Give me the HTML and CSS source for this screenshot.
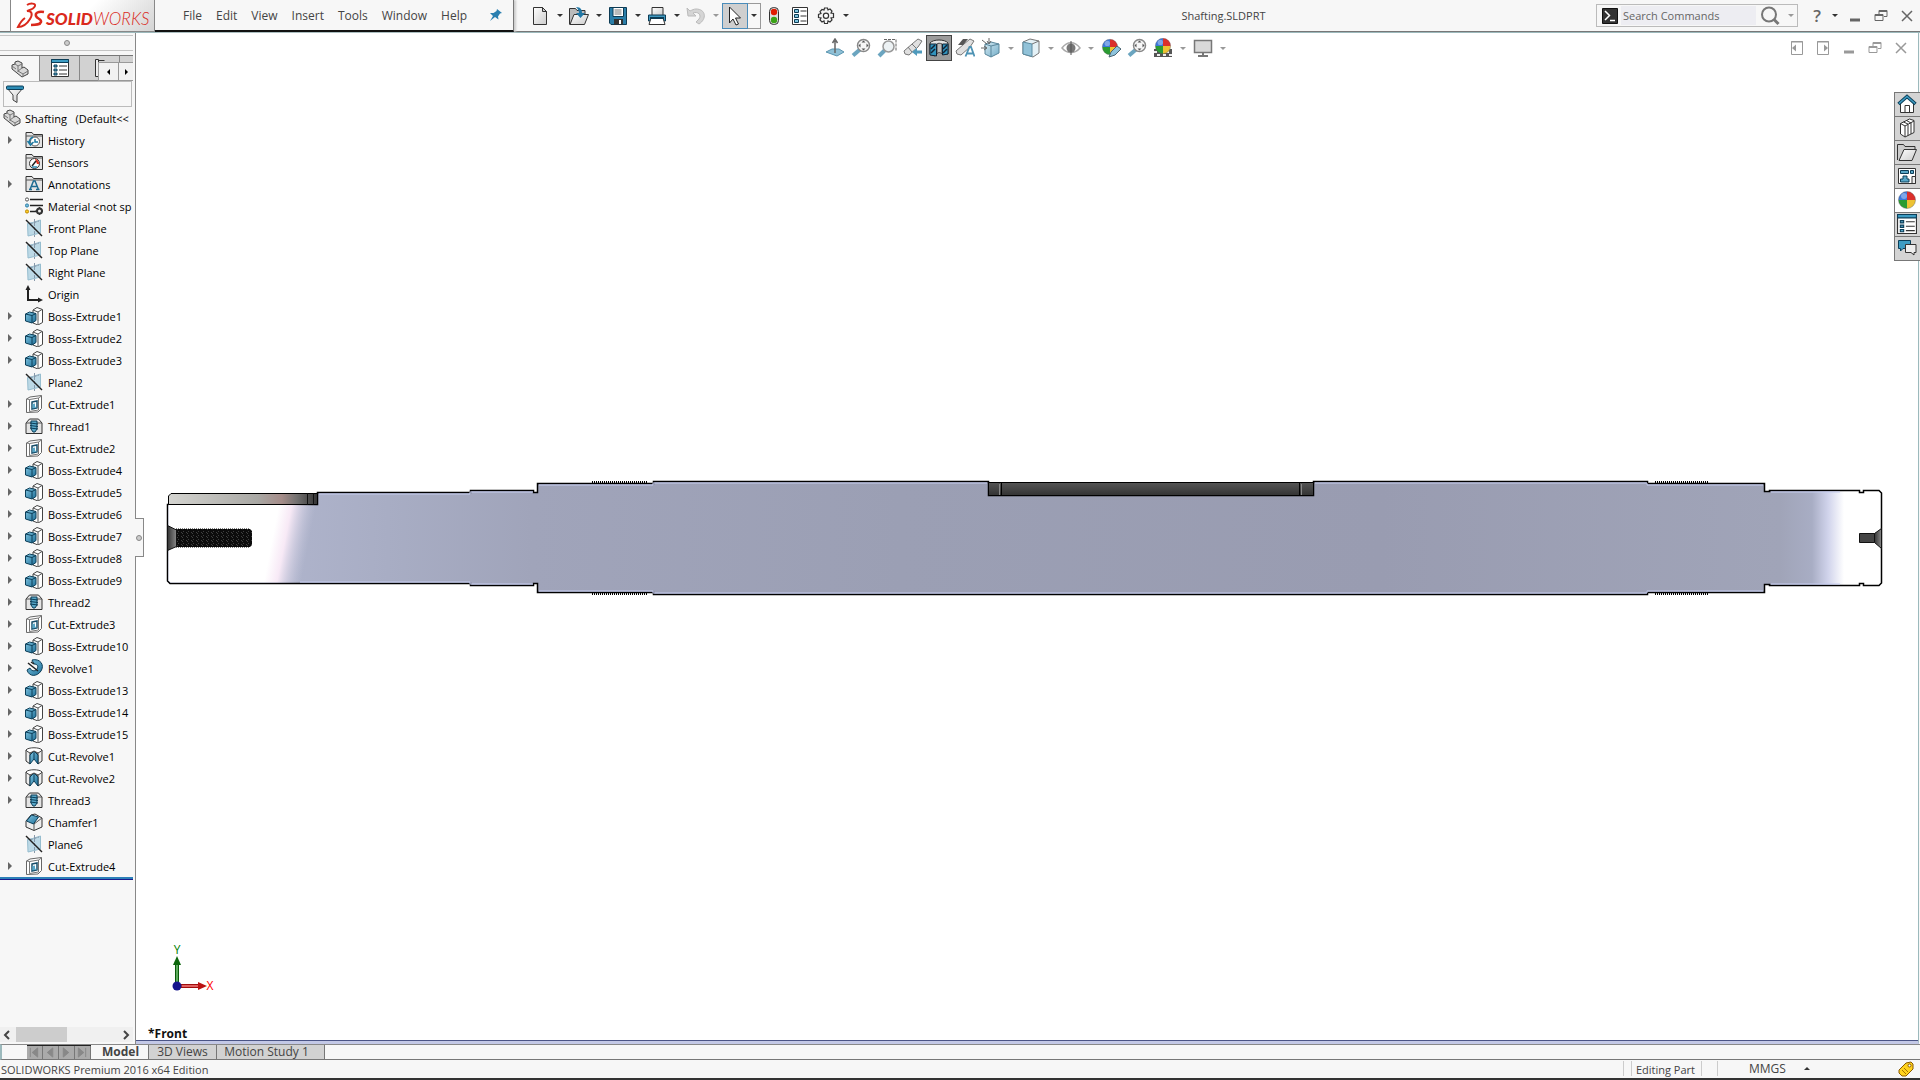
FILE: index.html
```html
<!DOCTYPE html>
<html lang="en">
<head>
<meta charset="UTF-8">
<meta name="viewport" content="width=device-width, initial-scale=1.0">
<title>Shafting.SLDPRT</title>
<link rel="stylesheet" href="styles.css">
</head>
<body>

<!-- Icon definitions -->
<svg class="defs" aria-hidden="true">
    <defs>
        <linearGradient id="paper" x1="0" y1="0" x2="1" y2="1"><stop offset="0" stop-color="#fff"/><stop offset="1" stop-color="#ccc"/></linearGradient>
        <linearGradient id="blue" x1="0" y1="0" x2="1" y2="1"><stop offset="0" stop-color="#7fc4e0"/><stop offset="1" stop-color="#1f7099"/></linearGradient>
        <linearGradient id="paleBlue" x1="0" y1="0" x2="1" y2="1"><stop offset="0" stop-color="#d3e8f1"/><stop offset="1" stop-color="#74aec9"/></linearGradient>
    </defs>

    <!-- Feature tree -->
    <symbol id="part" viewBox="0 0 18 18"><path d="M1 9V5l3-1 0-2 3-1 4 2v5l2-1 4 3v4l-6 3z" fill="#d8d8d8" stroke="#444" stroke-linejoin="round"/><path d="M4 4l3 2v6M7 6l4-2M1 6l4 3M11 8l-4 3 5 3 5-3M12 14v3" fill="none" stroke="#777"/></symbol>
    <symbol id="folder" viewBox="0 0 18 18"><path d="M1 16.500V1.500h6l1.500 2H17.500v13z" fill="#e4e4e4" stroke="#333"/><path d="M1 5h16" stroke="#555"/></symbol>
    <symbol id="history" viewBox="0 0 18 18"><use href="#folder"/><circle cx="10" cy="10.500" r="4.500" fill="#fff" stroke="#555"/><path d="M5 13a5 5 0 0 1 3-7M2.500 10l3 4 3-3M10 8v3h3" fill="none" stroke="#1b7aa3" stroke-width="1.500"/></symbol>
    <symbol id="sensors" viewBox="0 0 18 18"><use href="#folder"/><circle cx="9.500" cy="10.500" r="5" fill="#fff" stroke="#333"/><path d="M10 6a4.500 4.500 0 0 1 4 5h-2z" fill="#e0301e"/><path d="M7 13l4-5" stroke="#222" stroke-width="1.500"/><path d="M7 14h5" stroke="#2b8db5" stroke-width="1.500"/></symbol>
    <symbol id="annotations" viewBox="0 0 18 18"><use href="#folder"/><path d="M5 14.500L8.500 6h1.500l3.500 8.500M6.500 11.500h5M4 14.500h3M11 14.500h3.500" fill="none" stroke="#1e6b92" stroke-width="1.500"/></symbol>
    <symbol id="material" viewBox="0 0 18 18"><path d="M5 2.500h13M5 8.500h13M5 14.500h7" stroke="#222" stroke-width="1.500"/><circle cx="2" cy="2.500" r="1.600" fill="#fff" stroke="#555"/><circle cx="2" cy="8.500" r="1.600" fill="#7bd" stroke="#2b7fa5"/><circle cx="2" cy="14.500" r="1.600" fill="#fc2" stroke="#b80"/><circle cx="14.500" cy="14" r="2.500" fill="#eee" stroke="#333" stroke-width="2"/><path d="M14.500 10v2M14.500 16v2M10.500 14h2M16.500 14h2" stroke="#333" stroke-width="1.500"/></symbol>
    <symbol id="plane" viewBox="0 0 18 18"><path d="M2.500 4.500l5-1 8-2.500v13l-12.500 3z" fill="#bcd9e6" stroke="#96bdcf"/><path d="M9.500 0v18M5 5l9-3" stroke="#89a" stroke-dasharray="3 1" fill="none"/><path d="M1 1l16 16" stroke="#222" stroke-width="1.500"/></symbol>
    <symbol id="origin" viewBox="0 0 18 18"><path d="M3 2v13h13" fill="none" stroke="#222" stroke-width="2"/><path d="M0.500 5L3 0l2.500 5zM13 12.500l5 2.500-5 2.500z" fill="#222"/></symbol>
    <symbol id="boss" viewBox="0 0 18 18"><path d="M8 3l4-2.500 5.500 2v13l-4.500 2.500-5-2z" fill="#fff" stroke="#444"/><path d="M13 5v12.500M13 5l4-2.500M8 3l5 2" fill="none" stroke="#555"/><path d="M.5 7l4-2 6.500 1.500v7l-4 2.500-6.500-2z" fill="url(#blue)" stroke="#0c3e58"/><path d="M.5 7L7 8.500V16M7 8.500l4-2" fill="none" stroke="#0c3e58"/></symbol>
    <symbol id="cut" viewBox="0 0 18 18"><path d="M1.500 4L5 2l11.500-1.500v13L13 17l-11.500 .5z" fill="#fff" stroke="#666"/><path d="M4.500 4.500l9-1.500v12l-9 1.500zM1.500 4l3 .5M13.500 3l3-2" fill="none" stroke="#777"/><path d="M7 7l5-1v7l-5 1z" fill="#fff" stroke="#174d69" stroke-width="1.500"/><path d="M7.500 9l2.500-.5v3l2 1-4.500 1z" fill="#57a7c8"/></symbol>
    <symbol id="thread" viewBox="0 0 18 18"><path d="M1 6l3.500-4h9L17 6v10.500H1z" fill="#e4e4e4" stroke="#333"/><path d="M1 6h16" stroke="#555"/><path d="M6 4h6v8l-2 3H8l-2-3z" fill="#57a7c8" stroke="#0c3e58"/><path d="M5 6l8 1M5 8.500l8 1M5 11l8 1" stroke="#0c3e58"/></symbol>
    <symbol id="revolve" viewBox="0 0 18 18"><path d="M7 1c8-2 13 5 9 11s-12 6-14-1l3-2c1 3 5 4 7 1s0-5-3-5z" fill="url(#blue)" stroke="#0c3e58"/><path d="M3 4l10 8M6 3l3 2" stroke="#222" stroke-width="1.500"/></symbol>
    <symbol id="cutrev" viewBox="0 0 18 18"><path d="M1 3v11l4 3V6h8v11l4-3V3z" fill="#ededed" stroke="#333"/><path d="M5 17V8l4-4 4 4v9l-4-5z" fill="url(#blue)" stroke="#0c3e58"/><path d="M9 4v8" stroke="#0c3e58"/><path d="M1 3c2-3 14-3 16 0-1 2-3 2-4 3L9 4 5 6C4 5 2 5 1 3z" fill="#fff" stroke="#444"/></symbol>
    <symbol id="chamfer" viewBox="0 0 18 18"><path d="M1 8l5-6 4-1 7 4v9l-8 3.500-8-3.500z" fill="#eee" stroke="#333"/><path d="M9 11v6.500M9 11l8-6" fill="none" stroke="#555"/><path d="M1.500 8l5-6 7 2-5 7z" fill="url(#blue)" stroke="#0c3e58"/></symbol>
    <symbol id="funnel" viewBox="0 0 18 18"><path d="M1 3l6 7v5l4 2.500V10l6-7z" fill="url(#paper)" stroke="#444"/><rect x=".5" y="1" width="17" height="3.500" rx="1" fill="#2c8cb5" stroke="#0c3e58"/></symbol>
    <symbol id="props" viewBox="0 0 18 18"><path d="M.5 .5h17v17H.5z" fill="#fff" stroke="#333"/><path d="M.5 .5h17v3H.5z" fill="#3d9cc3" stroke="#0c3e58"/><path d="M3 6h3v2H3zM3 10h3v2H3zM3 14h3v2H3z" fill="#57a7c8" stroke="#0c3e58"/><path d="M8 7h8M8 11h8M8 15h8" stroke="#333"/></symbol>
    <symbol id="config" viewBox="0 0 18 18"><path d="M4.500 .5h3v17h-3zM7.500 1.500h6M7.500 4.500h4v9h-4" fill="#eee" stroke="#333"/></symbol>

    <!-- Main toolbar -->
    <symbol id="new" viewBox="0 0 20 20"><path d="M3.500 1.500h9l4 4v13h-13z" fill="url(#paper)" stroke="#333"/><path d="M12.500 1.500v4h4z" fill="#ccc" stroke="#333"/></symbol>
    <symbol id="open" viewBox="0 0 20 20"><path d="M.5 18.500v-16h6l1.500 2h8v4" fill="#bbb" stroke="#333"/><path d="M1 18.500l4-10h14.500l-4 10z" fill="url(#paper)" stroke="#333"/><path d="M7 1c5 0 6 3 6 6h3l-4.500 5L7 7h3c0-2-1-4-3-6z" fill="#2278a6"/></symbol>
    <symbol id="save" viewBox="0 0 20 20"><path d="M1.500 1.500h17v17H3l-1.500-1.500z" fill="#2a7ea9" stroke="#0d3b54"/><path d="M5 1.500h10.500v9H5z" fill="#fff" stroke="#0d3b54"/><path d="M6.500 4h7M6.500 6h7M6.500 8h7" stroke="#777"/><path d="M6 13h9v5.500H6z" fill="#333"/><path d="M11 14h2v4h-2z" fill="#fff"/></symbol>
    <symbol id="print" viewBox="0 0 20 20"><path d="M5 1.500h11v8H5z" fill="url(#paper)" stroke="#333"/><path d="M1.500 9h17v6h-17z" fill="#3f98bf" stroke="#0d3b54"/><path d="M4 12h12l2 6.500H2z" fill="#fff" stroke="#333"/><path d="M3 12h14" stroke="#0d3b54" stroke-width="2"/></symbol>
    <symbol id="undo" viewBox="0 0 20 20"><path d="M1 2l1 8h8L7 7c5-2 9 2 6 6l-3 3 3 2c8-5 7-15-3-15-2 0-4 1-6 2z" fill="#d5d5d5" stroke="#bbb"/></symbol>
    <symbol id="cursor" viewBox="0 0 20 20"><path d="M4.500 1l11 11h-5l3 6-2.500 1-3-6-3.500 4z" fill="#fff" stroke="#222"/></symbol>
    <symbol id="traffic" viewBox="0 0 20 20"><rect x="5.500" y="1.500" width="9" height="17" rx="4" fill="#ddd" stroke="#333"/><circle cx="10" cy="6" r="3.200" fill="#e01b00"/><circle cx="10" cy="14" r="3.200" fill="#3aa315"/></symbol>
    <symbol id="options" viewBox="0 0 20 20"><path d="M2.500 1.500h15v17h-15z" fill="#fff" stroke="#333"/><path d="M4.500 3.500h4v3h-4zM4.500 8.500h4v3h-4zM4.500 13.500h4v3h-4z" fill="#7cc3de" stroke="#0d3b54"/><path d="M10.500 5h6M10.500 10h6M10.500 15h6" stroke="#333"/></symbol>
    <symbol id="gear" viewBox="0 0 20 20"><path d="M8 4l.5-2h3l.5 2 2-1 2 2-1 2 2.500.5v4L15 12l1 2-2 2-2-1-.5 2.500h-3L8 15l-2 1-2-2 1-2-2.500-.5v-3L5 7.500 4 5.500l2-2z" fill="#f4f4f4" stroke="#333" stroke-width="1.200"/><circle cx="10" cy="9.800" r="2.600" fill="#fff" stroke="#333" stroke-width="1.200"/></symbol>
    <symbol id="pin" viewBox="0 0 14 14"><path d="M8 1l5 4-2 .5-2 3 .5 3L6 9 1 13l3-5L1 5l3.500 0L7.500 3z" fill="#2a7fb0"/></symbol>

    <!-- Heads-up view toolbar -->
    <symbol id="normal" viewBox="0 0 20 20"><path d="M1 14l6-3h7l5 3-7 4z" fill="#8fc0d6" stroke="#5b96b1"/><path d="M10 15V3M7.500 5L10 1l2.500 4" fill="none" stroke="#666" stroke-width="1.500"/></symbol>
    <symbol id="zoomfit" viewBox="0 0 20 20"><path d="M2 17.500l7-6" stroke="#6ba5c0" stroke-width="4"/><circle cx="12.500" cy="7.500" r="6" fill="#f7f7f7" stroke="#888" stroke-width="1.500"/><path d="M12.500 2.500l2 2h-4zM12.500 12.500l2-2h-4zM7.500 7.500l2-2v4zM17.500 7.500l-2-2v4z" fill="#555"/></symbol>
    <symbol id="zoomarea" viewBox="0 0 20 20"><path d="M7 1.500h12v12" fill="none" stroke="#666" stroke-dasharray="3 1"/><path d="M2 18l6-6" stroke="#6ba5c0" stroke-width="4"/><circle cx="11.500" cy="8.500" r="5.500" fill="#edf2f4" stroke="#999" stroke-width="1.500"/></symbol>
    <symbol id="prev" viewBox="0 0 20 20"><path d="M1 13l8-7 6-5 4 2-4 6-9 8-4-1z" fill="#e0e0e0" stroke="#777"/><path d="M9 6l4 4M5 9l4 5" stroke="#777"/><path d="M9 14l5-4v2.500h5v3h-5V18z" fill="#4f9abc"/></symbol>
    <symbol id="section" viewBox="0 0 20 20"><path d="M1 5c3-4 15-4 18 0v11h-5V9H6v9l-5-2z" fill="#e5e5e5" stroke="#333"/><path d="M8 6c1-1 3-1 5 0v10c-2-2-4-2-5 0z" fill="#bbb" stroke="#444"/><path d="M1 6h6.500v12L1 17zM13.500 6H19v10l-5.500 1z" fill="#3193bd" stroke="#123"/><path d="M2 11l4-4M2 15l4-4M14 11l4-4M14 15l4-4" stroke="#123" stroke-width="1.500"/></symbol>
    <symbol id="dynview" viewBox="0 0 20 20"><path d="M1 13l8-7 6-5 4 2-4 6-9 8-4-1z" fill="#e0e0e0" stroke="#777"/><path d="M3 7l5-6h5L8 7z" fill="#555"/><path d="M10.500 18.500L14.500 9h1.500l3.500 9.500M12 15.500h6" fill="none" stroke="#4f93b4" stroke-width="1.800"/></symbol>
    <symbol id="orient" viewBox="0 0 20 20"><path d="M4 6l6-2 8 2v9l-8 4-6-3z" fill="url(#paleBlue)" stroke="#59869b"/><path d="M4 6l6 2v11M10 8l8-2" fill="none" stroke="#59869b"/><path d="M8 0v5M6 3l2 3 2-3M0 10h5M3 8l3 2-3 2M1 2l5 4" fill="none" stroke="#666"/></symbol>
    <symbol id="display" viewBox="0 0 20 20"><path d="M2 4l7-3 9 2v12l-6 4-10-3z" fill="#e4f1f6" stroke="#777"/><path d="M2 4l9 2v12.500l-9-2.500z" fill="#91c2d8" stroke="#5a8ba1"/><path d="M11 6l7-3" stroke="#777"/></symbol>
    <symbol id="eye" viewBox="0 0 20 20"><path d="M1 10c5-7 13-7 18 0-5 6-13 6-18 0z" fill="#fff" stroke="#aaa" stroke-width="1.500"/><circle cx="10" cy="10" r="4.500" fill="#777"/><path d="M10 3v14" stroke="#555"/></symbol>
    <symbol id="ball" viewBox="0 0 20 20"><path d="M10 10V1.500A8.500 8.500 0 0 0 1.500 10z" fill="#3b78dc"/><path d="M10 10h8.500A8.500 8.500 0 0 0 10 1.500z" fill="#dc2f2b"/><path d="M10 10H1.500A8.500 8.500 0 0 0 10 18.500z" fill="#2a9c32"/><path d="M10 10v8.500a8.500 8.500 0 0 0 8.500-8.500z" fill="#edc233"/><circle cx="7" cy="6" r="3" fill="#fff" opacity=".35"/><circle cx="10" cy="10" r="8.500" fill="none" stroke="#555" stroke-opacity=".4"/></symbol>
    <symbol id="appearance" viewBox="0 0 20 20"><use href="#ball" width="18" height="18"/><path d="M8 19l2-5 6-6 4 3-6 6z" fill="#8dc3dc" stroke="#4b6572"/></symbol>
    <symbol id="scene" viewBox="0 0 20 20"><path d="M1 11h18v8H1z" fill="#555"/><path d="M1 14h18" stroke="#eee" stroke-width="2" stroke-dasharray="3 3"/><path d="M4 17h15" stroke="#eee" stroke-width="2" stroke-dasharray="3 3"/><use href="#ball" x="1" y="-1" width="18" height="18"/></symbol>
    <symbol id="monitor" viewBox="0 0 20 20"><path d="M1.500 2.500h17v12h-17z" fill="#d9d9d9" stroke="#777" stroke-width="1.500"/><path d="M10 15v3M5 18h10" stroke="#777" stroke-width="2"/></symbol>

    <!-- Window controls -->
    <symbol id="min" viewBox="0 0 14 14"><path d="M2 11h10" stroke="currentColor" stroke-width="3"/></symbol>
    <symbol id="restore" viewBox="0 0 14 14"><path d="M5 5V1.500h8v6h-3M1 5.500h8v6H1zM1 6.500h8M5 2.500h8" fill="none" stroke="currentColor"/></symbol>
    <symbol id="close" viewBox="0 0 14 14"><path d="M2 2l10 10M12 2L2 12" stroke="currentColor" stroke-width="1.500"/></symbol>
    <symbol id="dockleft" viewBox="0 0 14 14"><path d="M1.500 .5h11v13h-11zM1 1h12" fill="none" stroke="currentColor"/><path d="M2 7l4-3.500v7z" fill="currentColor"/></symbol>
    <symbol id="dockright" viewBox="0 0 14 14"><path d="M1.500 .5h11v13h-11zM1 1h12" fill="none" stroke="currentColor"/><path d="M12 7L8 3.500v7z" fill="currentColor"/></symbol>
    <symbol id="magnifier" viewBox="0 0 20 20"><circle cx="9" cy="8.500" r="7" fill="none" stroke="#777" stroke-width="2"/><path d="M13.500 13l5 5" stroke="#777" stroke-width="3"/></symbol>
    <symbol id="terminal" viewBox="0 0 16 16"><path d="M.5 .5h15v15H.5z" fill="#333" stroke="#111"/><path d="M3 3l4.500 4.500L3 12M8 12.500h5" fill="none" stroke="#fff" stroke-width="1.500"/></symbol>

    <!-- Task pane -->
    <symbol id="home" viewBox="0 0 20 20"><path d="M3.500 9v9.500h13V9L10 3z" fill="#fff" stroke="#333"/><path d="M8 18.500v-7h4.500v7" fill="none" stroke="#333"/><path d="M1.500 10L10 2.500l8.500 7.500" fill="none" stroke="#0c3e58" stroke-width="3.500"/><path d="M2 9.500L10 2.500l8 7" fill="none" stroke="#3d9cc3" stroke-width="1.500"/></symbol>
    <symbol id="library" viewBox="0 0 20 20"><path d="M3.500 5.500l9-4.500 4.500 1.500v12l-9 4.500-4.500-3z" fill="#fff" stroke="#333" stroke-linejoin="round"/><path d="M3.500 5.500L8 8v11M8 8l9-5M11 6.500v11M14 5v11M6.500 4L11 6M9.500 2.500L14 5" fill="none" stroke="#333"/></symbol>
    <symbol id="explorer" viewBox="0 0 20 20"><path d="M.5 18V2.500h6l1.500 2h10v3" fill="#ccc" stroke="#333"/><path d="M2 18.500l5-11h12.500l-4.500 11z" fill="url(#paper)" stroke="#333"/></symbol>
    <symbol id="palette" viewBox="0 0 20 20"><path d="M1.500 2.500h17v15h-17z" fill="#fff" stroke="#333"/><path d="M3.500 4.500h8v3h-8zM13.500 4.500h3v3h-3zM6 10h4v3h2v3H3.500v-3H6z" fill="#57a7c8" stroke="#0c3e58"/><path d="M15 10.500h3.500v7H15z" fill="#eee" stroke="#333"/></symbol>
    <symbol id="forum" viewBox="0 0 20 20"><path d="M1.500 2.500h12v8H6L3.500 13v-2.500h-2z" fill="#3d9cc3" stroke="#0c3e58"/><path d="M8.500 6.500h10.500v8h-2V17l-3-2.500H8.500z" fill="#eee" stroke="#333"/></symbol>
    <symbol id="tag" viewBox="0 0 16 16"><path d="M1 9l7-7 5-1 2 2v5l-7 7H4l-3-3z" fill="#ffd21c" stroke="#8a5a00"/><path d="M4 9l4 4M6 7l4 4" stroke="#a87400"/><circle cx="11.500" cy="4.500" r="1.500" fill="#fff" stroke="#8a5a00"/></symbol>
</svg>

<header class="titlebar">
    <div class="logo">
        <svg class="logo-mark" viewBox="0 0 30 28" aria-hidden="true">
            <path d="M11 3c3-2 9-2 8 1s-5 4-8 5c5 0 6 3 3 8s-8 8-12 8c2-4 4-7 7-9" fill="none" stroke="#da291c" stroke-width="2"/>
            <path d="M28 10c-6-1-9 1-8 4s6 3 5 6-5 3-10 3" fill="none" stroke="#da291c" stroke-width="2.500"/>
        </svg>
        <span class="logo-text"><b>SOLID</b>WORKS</span>
    </div>
    <nav class="menu">
        <a href="#">File</a>
        <a href="#">Edit</a>
        <a href="#">View</a>
        <a href="#">Insert</a>
        <a href="#">Tools</a>
        <a href="#">Window</a>
        <a href="#">Help</a>
        <button class="pin" aria-label="Pin menu"><svg><use href="#pin"/></svg></button>
    </nav>
    <div class="toolbar main-tools">
        <button class="tool" aria-label="New"><svg><use href="#new"/></svg></button><button class="caret" aria-label="New options"></button>
        <button class="tool" aria-label="Open"><svg><use href="#open"/></svg></button><button class="caret" aria-label="Open options"></button>
        <button class="tool" aria-label="Save"><svg><use href="#save"/></svg></button><button class="caret" aria-label="Save options"></button>
        <button class="tool" aria-label="Print"><svg><use href="#print"/></svg></button><button class="caret" aria-label="Print options"></button>
        <button class="tool" aria-label="Undo"><svg><use href="#undo"/></svg></button><button class="caret faded" aria-label="Undo options"></button>
        <button class="tool selected" aria-label="Select"><svg><use href="#cursor"/></svg></button><button class="caret boxed" aria-label="Select options"></button>
        <button class="tool" aria-label="Rebuild"><svg><use href="#traffic"/></svg></button>
        <button class="tool" aria-label="File properties"><svg><use href="#options"/></svg></button>
        <button class="tool" aria-label="Options"><svg><use href="#gear"/></svg></button><button class="caret" aria-label="Options list"></button>
    </div>
    <h1 class="doc-title">Shafting.SLDPRT</h1>
    <form class="search">
        <svg class="search-mode"><use href="#terminal"/></svg>
        <input type="text" placeholder="Search Commands" aria-label="Search Commands">
        <button type="button" class="search-go" aria-label="Search"><svg><use href="#magnifier"/></svg></button>
        <button type="button" class="caret faded" aria-label="Search options"></button>
    </form>
    <div class="window-buttons">
        <button class="help">?</button><button class="caret" aria-label="Help options"></button>
        <button class="win" aria-label="Minimize"><svg><use href="#min"/></svg></button>
        <button class="win" aria-label="Restore"><svg><use href="#restore"/></svg></button>
        <button class="win" aria-label="Close"><svg><use href="#close"/></svg></button>
    </div>
</header>

<main class="workspace">
    <aside class="panel">
        <div class="grip"><span class="dot"></span></div>
        <div class="panel-tabs">
            <button class="panel-tab active" aria-label="Feature tree"><svg><use href="#part"/></svg></button>
            <button class="panel-tab" aria-label="Properties"><svg><use href="#props"/></svg></button>
            <button class="panel-tab" aria-label="Configurations"><svg><use href="#config"/></svg></button>
            <button class="panel-tab" aria-label="Dimensions"></button>
            <div class="tab-scroll">
                <button class="scroll-left" aria-label="Previous tabs"></button>
                <button class="scroll-right" aria-label="Next tabs"></button>
            </div>
        </div>
        <label class="filter"><svg><use href="#funnel"/></svg><input type="text" aria-label="Filter tree"></label>
        <ul class="tree">
            <li class="root"><svg><use href="#part"/></svg>Shafting &nbsp;&nbsp;(Default&lt;&lt;</li>
            <li class="parent"><svg><use href="#history"/></svg>History</li>
            <li><svg><use href="#sensors"/></svg>Sensors</li>
            <li class="parent"><svg><use href="#annotations"/></svg>Annotations</li>
            <li><svg><use href="#material"/></svg>Material &lt;not sp</li>
            <li><svg><use href="#plane"/></svg>Front Plane</li>
            <li><svg><use href="#plane"/></svg>Top Plane</li>
            <li><svg><use href="#plane"/></svg>Right Plane</li>
            <li><svg><use href="#origin"/></svg>Origin</li>
            <li class="parent"><svg><use href="#boss"/></svg>Boss-Extrude1</li>
            <li class="parent"><svg><use href="#boss"/></svg>Boss-Extrude2</li>
            <li class="parent"><svg><use href="#boss"/></svg>Boss-Extrude3</li>
            <li><svg><use href="#plane"/></svg>Plane2</li>
            <li class="parent"><svg><use href="#cut"/></svg>Cut-Extrude1</li>
            <li class="parent"><svg><use href="#thread"/></svg>Thread1</li>
            <li class="parent"><svg><use href="#cut"/></svg>Cut-Extrude2</li>
            <li class="parent"><svg><use href="#boss"/></svg>Boss-Extrude4</li>
            <li class="parent"><svg><use href="#boss"/></svg>Boss-Extrude5</li>
            <li class="parent"><svg><use href="#boss"/></svg>Boss-Extrude6</li>
            <li class="parent"><svg><use href="#boss"/></svg>Boss-Extrude7</li>
            <li class="parent"><svg><use href="#boss"/></svg>Boss-Extrude8</li>
            <li class="parent"><svg><use href="#boss"/></svg>Boss-Extrude9</li>
            <li class="parent"><svg><use href="#thread"/></svg>Thread2</li>
            <li class="parent"><svg><use href="#cut"/></svg>Cut-Extrude3</li>
            <li class="parent"><svg><use href="#boss"/></svg>Boss-Extrude10</li>
            <li class="parent"><svg><use href="#revolve"/></svg>Revolve1</li>
            <li class="parent"><svg><use href="#boss"/></svg>Boss-Extrude13</li>
            <li class="parent"><svg><use href="#boss"/></svg>Boss-Extrude14</li>
            <li class="parent"><svg><use href="#boss"/></svg>Boss-Extrude15</li>
            <li class="parent"><svg><use href="#cutrev"/></svg>Cut-Revolve1</li>
            <li class="parent"><svg><use href="#cutrev"/></svg>Cut-Revolve2</li>
            <li class="parent"><svg><use href="#thread"/></svg>Thread3</li>
            <li><svg><use href="#chamfer"/></svg>Chamfer1</li>
            <li><svg><use href="#plane"/></svg>Plane6</li>
            <li class="parent"><svg><use href="#cut"/></svg>Cut-Extrude4</li>
        </ul>
        <div class="rollback"></div>
        <div class="hscroll">
            <button aria-label="Scroll left"><svg viewBox="0 0 8 10"><path d="M6 1L2 5l4 4"/></svg></button>
            <div class="track"><div class="thumb"></div></div>
            <button aria-label="Scroll right"><svg viewBox="0 0 8 10"><path d="M2 1l4 4-4 4"/></svg></button>
        </div>
        <button class="flyout" aria-label="Collapse panel"><span class="dot"></span></button>
    </aside>

    <section class="view">
        <div class="toolbar view-tools">
            <button class="tool" aria-label="Normal to"><svg><use href="#normal"/></svg></button>
            <button class="tool" aria-label="Zoom to fit"><svg><use href="#zoomfit"/></svg></button>
            <button class="tool" aria-label="Zoom to area"><svg><use href="#zoomarea"/></svg></button>
            <button class="tool" aria-label="Previous view"><svg><use href="#prev"/></svg></button>
            <button class="tool pressed" aria-label="Section view"><svg><use href="#section"/></svg></button>
            <button class="tool" aria-label="Dynamic annotation views"><svg><use href="#dynview"/></svg></button>
            <button class="tool" aria-label="View orientation"><svg><use href="#orient"/></svg></button><button class="caret faded" aria-label="Orientation options"></button>
            <button class="tool" aria-label="Display style"><svg><use href="#display"/></svg></button><button class="caret faded" aria-label="Display options"></button>
            <button class="tool" aria-label="Hide or show items"><svg><use href="#eye"/></svg></button><button class="caret faded" aria-label="Hide options"></button>
            <button class="tool" aria-label="Edit appearance"><svg><use href="#appearance"/></svg></button>
            <button class="tool" aria-label="Zoom to selection"><svg><use href="#zoomfit"/></svg></button>
            <button class="tool" aria-label="Apply scene"><svg><use href="#scene"/></svg></button><button class="caret faded" aria-label="Scene options"></button>
            <button class="tool" aria-label="View settings"><svg><use href="#monitor"/></svg></button><button class="caret faded" aria-label="View setting options"></button>
        </div>
        <div class="doc-buttons">
            <button class="win" aria-label="Dock left"><svg><use href="#dockleft"/></svg></button>
            <button class="win" aria-label="Dock right"><svg><use href="#dockright"/></svg></button>
            <button class="win" aria-label="Minimize document"><svg><use href="#min"/></svg></button>
            <button class="win" aria-label="Restore document"><svg><use href="#restore"/></svg></button>
            <button class="win" aria-label="Close document"><svg><use href="#close"/></svg></button>
        </div>

        <svg class="model" viewBox="136 33 1782 1008" role="img" aria-label="Section of shaft, front view">
            <defs>
                <linearGradient id="steel" gradientUnits="userSpaceOnUse" x1="260" y1="0" x2="1860" y2="0">
                    <stop offset="0" stop-color="#b0b5cd"/>
                    <stop offset=".08" stop-color="#a8adc4"/>
                    <stop offset=".17" stop-color="#a0a4ba"/>
                    <stop offset=".4" stop-color="#9b9fb4"/>
                    <stop offset=".7" stop-color="#999cb1"/>
                    <stop offset=".95" stop-color="#a0a4b8"/>
                    <stop offset=".97" stop-color="#a8adc4"/>
                    <stop offset=".98" stop-color="#d0d3eb"/>
                    <stop offset=".99" stop-color="#fff"/>
                </linearGradient>
                <linearGradient id="glare" gradientUnits="userSpaceOnUse" x1="272" y1="540" x2="308" y2="547">
                    <stop offset="0" stop-color="#fff"/>
                    <stop offset=".35" stop-color="#fbecf8" stop-opacity=".95"/>
                    <stop offset="1" stop-color="#c9cbe0" stop-opacity="0"/>
                </linearGradient>
                <linearGradient id="keyway"><stop offset="0" stop-color="#d4d4d0"/><stop offset=".6" stop-color="#a9a8a4"/><stop offset=".76" stop-color="#a58c89"/><stop offset=".86" stop-color="#737170"/><stop offset="1" stop-color="#333"/></linearGradient>
                <linearGradient id="slot" x1="0" y1="0" x2="0" y2="1"><stop offset="0" stop-color="#555"/><stop offset="1" stop-color="#333"/></linearGradient>
                <linearGradient id="cone"><stop offset="0" stop-color="#333"/><stop offset="1" stop-color="#888"/></linearGradient>
                <pattern id="tap" width="5" height="4" patternUnits="userSpaceOnUse"><path d="M0 0h5v4H0z" fill="#0c0c0c"/><path d="M1 0l2 2M3 3l1 1" stroke="#555" stroke-width=".7"/></pattern>
            </defs>

            <!-- Sectioned body -->
            <path class="body" d="M167.500 504.500H317.500V492.500H470.500V490.500H533.500V492.500H537.500V483.500H653.500V481.500H988.500V495.500H1313.500V481.500H1647.500V483.500H1764.500V491.500H1769.500V490.500H1859.500V492.500H1863.500V490.500H1879L1881.500 493V583L1879 585.500H1863.500V583.500H1859.500V585.500H1769.500V584.500H1764.500V592.500H1647.500V594.500H653.500V592.500H537.500V583.500H533.500V585.500H470.500V583.500H170L167.500 581Z"/>
            <path d="M168.500 505H330V582.500H170.500L168.500 580.500Z" fill="url(#glare)"/>
            <path class="sheen" d="M319 494H470V492H533M539 485H653V483H987M1315 483H1647V485H1763M1771 492H1840M300 582H470V584H533M539 591H653V593H1647V591H1763M1771 584H1840"/>
            <path class="thread-edge" d="M592 482.500H648M592 593.500H648M1655 482.500H1709M1655 593.500H1709"/>

            <!-- Left keyway and tapped hole -->
            <path d="M168.500 504.500V496L171 493.500H317.500V504.500Z" fill="url(#keyway)" stroke="#000"/>
            <path d="M307.500 493.500V504.500M313.500 493.500V504.500" stroke="#111"/>
            <path d="M176 529H250L252 531V545L250 547H176Z" fill="url(#tap)"/>
            <path d="M176 529H250M176 547H250" stroke="#000" stroke-dasharray="1 1"/>
            <path d="M167.500 525.500L176.500 530V546.500L167.500 550.500Z" fill="url(#cone)" stroke="#111"/>

            <!-- Middle slot -->
            <path d="M988.500 482.500H1313.500V495.500H988.500Z" fill="url(#slot)" stroke="#000"/>
            <path d="M1001.500 483V495M1299.500 483V495" stroke="#000"/>
            <path d="M999.500 484V495M1301.500 484V495" stroke="#888"/>

            <!-- Right centre hole -->
            <path d="M1859.500 533.500H1874.500V542.500H1859.500Z" fill="#444" stroke="#111"/>
            <path d="M1874.500 533.500L1881.500 528.500V548.500L1874.500 542.500Z" fill="url(#cone)" stroke="#111"/>

            <!-- Axis triad -->
            <path d="M175.500 964H178.500V985H175.500Z" fill="#5cab5c" stroke="#0a5a0a"/>
            <path d="M177 956L181 965H173Z" fill="#0b650b"/>
            <path d="M181 984.500H199V987.500H181Z" fill="#e06060" stroke="#a00c0c"/>
            <path d="M198 982L207 986L198 990Z" fill="#b11"/>
            <circle cx="177" cy="986" r="4.500" fill="#14148c"/>
            <text class="axis-y" x="177" y="954">Y</text>
            <text class="axis-x" x="210" y="990">X</text>
            <text class="view-name" x="148" y="1038">*Front</text>
        </svg>
    </section>

    <div class="task-pane">
        <button aria-label="Resources"><svg><use href="#home"/></svg></button>
        <button aria-label="Design library"><svg><use href="#library"/></svg></button>
        <button aria-label="File explorer"><svg><use href="#explorer"/></svg></button>
        <button aria-label="View palette"><svg><use href="#palette"/></svg></button>
        <button class="active" aria-label="Appearances"><svg><use href="#ball"/></svg></button>
        <button aria-label="Custom properties"><svg><use href="#props"/></svg></button>
        <button aria-label="Forum"><svg><use href="#forum"/></svg></button>
    </div>
</main>

<div class="sheet-tabs">
    <div class="sheet-nav">
        <button aria-label="First tab"><svg viewBox="0 0 12 12"><path d="M2 1v10M10 1L4 6l6 5z"/></svg></button>
        <button aria-label="Previous tab"><svg viewBox="0 0 12 12"><path d="M9 1L3 6l6 5z"/></svg></button>
        <button aria-label="Next tab"><svg viewBox="0 0 12 12"><path d="M3 1l6 5-6 5z"/></svg></button>
        <button aria-label="Last tab"><svg viewBox="0 0 12 12"><path d="M10 1v10M2 1l6 5-6 5z"/></svg></button>
    </div>
    <button class="sheet active">Model</button>
    <button class="sheet">3D Views</button>
    <button class="sheet study">Motion Study 1</button>
</div>

<footer class="status">
    <span class="edition">SOLIDWORKS Premium 2016 x64 Edition</span>
    <span class="cell spacer"></span>
    <span class="cell">Editing Part</span>
    <span class="cell spacer"></span>
    <button class="cell units">MMGS <span class="up"></span></button>
    <svg class="tag"><use href="#tag"/></svg>
</footer>

</body>
</html>
```

FILE: styles.css
```css
/* Reset and basic styles */
* {
    box-sizing: border-box;
}
body {
    margin: 0;
    min-height: 100vh;
    display: flex;
    flex-direction: column;
    font-family: "Open Sans", "Noto Sans", sans-serif;
    font-size: 11px;
    color: #444;
    background: #f7f7f7;
}
button {
    padding: 0;
    border: 0;
    background: none;
    font: inherit;
    color: inherit;
    display: flex;
    align-items: center;
    justify-content: center;
}
input {
    border: 0;
    padding: 0;
    min-width: 0;
    font: inherit;
    background: none;
}
svg {
    display: block;
    flex-shrink: 0;
}
.defs {
    position: absolute;
    width: 0;
    height: 0;
}

/* Title bar */
.titlebar {
    height: 33px;
    display: flex;
    align-items: stretch;
    border-bottom: 1px solid #9cb9bc;
    box-shadow: inset 0 -1px #777;
}
.logo {
    width: 145px;
    margin-left: 10px;
    padding-left: 5px;
    display: flex;
    align-items: center;
    border: solid #888;
    border-width: 0 1px 1px;
    background: linear-gradient(135deg, #fff 50%, #d4d4d4);
    color: #da291c;
}
.logo-mark {
    width: 30px;
    height: 28px;
}
.logo-text {
    margin-top: 6px;
    font-family: Lato, sans-serif;
    font-size: 17px;
    font-style: italic;
    font-weight: 300;
}
.logo-text b {
    font-weight: 900;
}
.menu {
    min-width: 359px;
    padding: 0 10px 0 28px;
    display: flex;
    align-items: center;
    gap: 14px;
    font-size: 12px;
    border-right: 1px solid #777;
    border-bottom: 2px solid #111;
    box-shadow: 2px 0 2px #ccc;
}
.menu a {
    color: #444;
    text-decoration: none;
}
.pin {
    margin-left: auto;
}
.pin svg {
    width: 14px;
    height: 14px;
}
.toolbar {
    display: flex;
    align-items: center;
}
.main-tools {
    margin-left: 13px;
    padding-bottom: 1px;
}
.tool {
    width: 26px;
    height: 26px;
}
.tool svg {
    width: 20px;
    height: 20px;
}
.tool.selected {
    background: #cfcfcf;
    border: 1px solid #4a8cba;
}
.tool.pressed {
    background: #9b9b9b;
    border: 1px solid #444;
}
.caret {
    width: 13px;
    height: 26px;
}
.caret::before {
    content: "";
    border: 3px solid transparent;
    border-top-color: #333;
    border-bottom: 0;
}
.caret.faded::before {
    border-top-color: #999;
}
.caret.boxed {
    border: 1px solid #999;
    border-left: 0;
}
.doc-title {
    flex: 1;
    margin: 0 0 2px;
    padding-right: 1px;
    align-self: center;
    text-align: center;
    font-size: 11px;
    font-weight: normal;
}
.search {
    width: 202px;
    height: 23px;
    margin: 4px 0;
    padding-left: 5px;
    display: flex;
    align-items: center;
    border: 1px solid #bbb;
}
.search-mode {
    width: 16px;
    height: 16px;
}
.search input {
    flex: 1;
    height: 19px;
    margin-left: 3px;
    padding-left: 2px;
    background: #ededf2;
}
.search input::placeholder {
    color: #666;
    opacity: 1;
}
.search-go {
    width: 28px;
}
.search-go svg {
    width: 20px;
    height: 20px;
}
.window-buttons {
    display: flex;
    align-items: center;
    padding-left: 8px;
    padding-bottom: 1px;
    color: #666;
}
.help {
    width: 22px;
    font-size: 17px;
    font-weight: 600;
}
.window-buttons .caret {
    margin-right: 1px;
}
.win {
    width: 26px;
    height: 26px;
}
.win svg {
    width: 14px;
    height: 14px;
}

/* Feature tree panel */
.workspace {
    flex: 1;
    display: flex;
    position: relative;
}
.panel {
    width: 136px;
    padding: 2px 2px 0 0;
    display: flex;
    flex-direction: column;
    position: relative;
    border-right: 1px solid #888;
    color: #000;
}
.grip {
    height: 16px;
    display: flex;
    align-items: center;
    justify-content: center;
    border: solid #c4c4c4;
    border-width: 1px 0;
}
.dot {
    width: 6px;
    height: 6px;
    border: 1px solid #888;
    border-radius: 50%;
    background: #ccc;
}
.panel-tabs {
    height: 26px;
    margin-top: 4px;
    display: flex;
    position: relative;
    overflow: hidden;
    border-top: 1px solid #777;
}
.panel-tab {
    flex: 0 0 40px;
    background: #d2d2d2;
    border: solid #888;
    border-width: 0 1px 1px 0;
}
.panel-tab.active {
    background: none;
    border-bottom: 0;
}
.panel-tab svg {
    width: 18px;
    height: 18px;
}
.tab-scroll {
    position: absolute;
    right: 0;
    bottom: 0;
    display: flex;
    background: #f2f2f2;
    border: solid #999;
    border-width: 1px 0 1px 1px;
}
.tab-scroll button {
    width: 19px;
    height: 17px;
}
.tab-scroll .scroll-right {
    width: 15px;
    border-left: 1px solid #999;
}
.scroll-left::before,
.scroll-right::before {
    content: "";
    border: 3px solid transparent;
    border-right-color: #000;
    border-left: 0;
}
.scroll-right::before {
    border: 3px solid transparent;
    border-left-color: #000;
    border-right: 0;
}
.filter {
    height: 26px;
    margin: 0 1px 0 3px;
    padding-left: 2px;
    display: flex;
    align-items: center;
    border: 1px solid #bbb;
}
.filter svg {
    width: 18px;
    height: 18px;
}
.filter input {
    flex: 1;
}
.tree {
    margin: 0;
    padding: 0;
    list-style: none;
    overflow: hidden;
}
.tree li {
    height: 22px;
    padding-left: 25px;
    display: flex;
    align-items: center;
    gap: 5px;
    white-space: nowrap;
}
.tree .root {
    padding-left: 3px;
    gap: 4px;
}
.tree svg {
    width: 18px;
    height: 18px;
}
.tree .parent {
    padding-left: 8px;
}
.tree .parent::before {
    content: "";
    margin-right: 8px;
    border: 4px solid transparent;
    border-left-color: #666;
    border-right: 0;
}
.rollback {
    height: 3px;
    background: #2c80b8;
    border-bottom: 1px solid #1a1a8c;
}
.hscroll {
    height: 15px;
    margin-top: auto;
    margin-bottom: 2px;
    display: flex;
    background: #f0f0f0;
}
.hscroll button {
    width: 16px;
    padding-right: 2px;
}
.hscroll .track + button {
    width: 13px;
}
.hscroll svg {
    width: 8px;
    height: 10px;
    fill: none;
    stroke: #444;
    stroke-width: 2;
}
.track {
    flex: 1;
}
.thumb {
    width: 49%;
    height: 100%;
    background: #cdcdcd;
}
.flyout {
    width: 9px;
    height: 39px;
    position: absolute;
    top: 48%;
    right: -9px;
    z-index: 1;
    background: #f7f7f7;
    border: 1px solid #888;
    border-left: 0;
}

/* Graphics area */
.view {
    flex: 1;
    position: relative;
    background: #fff;
    border-right: 1px solid #9cb9bc;
    border-bottom: 3px solid #c3c8e6;
    margin-right: 1px;
}
.view::after {
    content: "";
    position: absolute;
    left: 0;
    right: 0;
    bottom: 0;
    height: 1px;
    background: #4a5486;
}
.view-tools {
    position: absolute;
    top: 2px;
    left: 0;
    right: 2px;
    justify-content: center;
}
.view-tools .caret {
    width: 14px;
}
.doc-buttons {
    position: absolute;
    top: 2px;
    right: 4px;
    display: flex;
    color: #999;
}
.model {
    width: 100%;
    height: 100%;
    position: absolute;
}
.view-tools,
.doc-buttons {
    z-index: 1;
}
.body {
    fill: url(#steel);
    stroke: #000;
    stroke-width: 1.5;
}
.sheen {
    fill: none;
    stroke: #c6cdf0;
    stroke-width: 1;
}
.thread-edge {
    stroke: #000;
    stroke-width: 3;
    stroke-dasharray: 1 1;
}
.axis-y,
.axis-x {
    font-family: "Open Sans", sans-serif;
    font-size: 12px;
    text-anchor: middle;
    fill: #008000;
}
.axis-x {
    fill: #f00;
}
.view-name {
    font-size: 12px;
    font-weight: bold;
    fill: #111;
}

/* Task pane */
.task-pane {
    width: 26px;
    position: absolute;
    top: 59px;
    right: 0;
    z-index: 2;
    border: 1px solid #777;
    border-width: 1px 0 0 1px;
}
.task-pane button {
    width: 25px;
    height: 24px;
    padding: 0 2px 1px 0;
    background: #d4d4d4;
    border-bottom: 1px solid #777;
}
.task-pane .active {
    background: #fff;
}
.task-pane svg {
    width: 20px;
    height: 20px;
}

/* Bottom tabs */
.sheet-tabs {
    height: 16px;
    display: flex;
    border-top: 1px solid #888;
    border-bottom: 1px solid #777;
    border-left: 2px solid #9cb9bc;
    padding-left: 25px;
}
.sheet-nav {
    display: flex;
    background: #aaa;
    border-top: 1px solid #222;
}
.sheet-nav button {
    width: 16px;
    padding-right: 1px;
    border-right: 1px solid #777;
}
.sheet-nav svg {
    width: 12px;
    height: 11px;
    fill: #888;
    stroke: #888;
}
.sheet {
    width: 68px;
    background: #d2d2d2;
    border-right: 1px solid #777;
    font-size: 12px;
    line-height: 14px;
}
.sheet.active {
    width: 58px;
    padding-left: 2px;
    background: none;
    font-weight: bold;
}
.sheet.study {
    width: 108px;
    padding-right: 8px;
}

/* Status bar */
.status {
    height: 20px;
    padding: 1px 6px 2px 1px;
    display: flex;
    align-items: stretch;
    line-height: 18px;
    border-bottom: 2px solid #333;
}
.edition {
    flex: 1;
}
.cell {
    padding: 0 6px 0 4px;
    border-left: 1px solid #ccc;
}
.cell.spacer {
    width: 8px;
    padding: 0;
}
.cell.spacer + .cell + .spacer {
    width: 16px;
}
.units {
    width: 181px;
    padding-left: 31px;
    justify-content: flex-start;
    gap: 18px;
    font-size: 12px;
}
.up {
    border: 3px solid transparent;
    border-bottom-color: #333;
    border-top: 0;
}
.tag {
    width: 16px;
    height: 16px;
}
```
